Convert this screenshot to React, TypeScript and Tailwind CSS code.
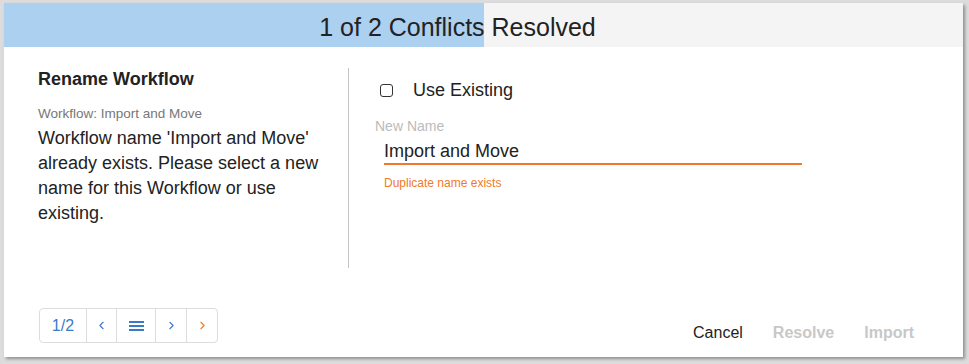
import { ChevronLeft, ChevronRight } from 'lucide-react';

// Conflict resolution dialog: rename a duplicate workflow on import

export default function App() {
  const resolved = 1;
  const total = 2;

  return (
    <div className="h-[364px] w-[969px] bg-[#dcdcdc] pt-[3px] pl-[4px] font-['Liberation_Sans',Arial,sans-serif]">
      <div className="flex h-[354px] w-[959px] flex-col bg-white shadow-[2px_2px_3px_rgba(0,0,0,0.35)]">
        {/* progress header */}
        <div className="relative h-[44px] w-full bg-[#f4f4f4]">
          <div
            className="absolute inset-y-0 left-0 bg-[#abd0f0]"
            style={{ width: `${(resolved / total) * 100}%` }}
          />
          <div className="relative flex h-full items-center justify-center pt-[6px] pr-[52px] text-[25px] text-[#222]">
            {resolved} of {total} Conflicts Resolved
          </div>
        </div>

        {/* body */}
        <div className="flex pt-[21px]">
          <div className="w-[344px] pl-[34px] pr-[12px]">
            <h2 className="mt-[1px] text-[18px] font-bold leading-[20px] text-[#222]">
              Rename Workflow
            </h2>
            <div className="mt-[17px] text-[13.5px] leading-[16px] text-[#777]">
              Workflow: Import and Move
            </div>
            <p className="mt-[4px] text-[18px] leading-[25px] text-[#222]">
              Workflow name 'Import and Move' already exists. Please select a new
              name for this Workflow or use existing.
            </p>
          </div>

          <div className="h-[200px] w-px bg-[#c4c4c4]" />

          <div className="flex-1 pl-[26px]">
            <label className="mt-[11px] flex items-center pl-[5px]">
              <span className="h-[13px] w-[13px] rounded-[3px] border border-[#333]" />
              <span className="ml-[20px] text-[18px] leading-[22px] text-[#222]">
                Use Existing
              </span>
            </label>
            <div className="mt-[17px] text-[14px] leading-[16px] text-[#bbb]">New Name</div>
            <div className="ml-[9px] mt-[5px] w-[418px]">
              <div className="text-[18px] leading-[24px] text-[#222]">Import and Move</div>
              <div className="h-[1.5px] w-full bg-[#f07a2a]" />
            </div>
            <div className="ml-[9px] mt-[11px] text-[12px] leading-[14px] text-[#f07a2a]">
              Duplicate name exists
            </div>
          </div>
        </div>

        {/* footer */}
        <div className="mt-auto flex items-end justify-between pb-[14px] pl-[35px] pr-[49px]">
          <div className="flex h-[35px] overflow-hidden rounded-[4px] border border-[#ddd] text-[#3a7bc8]">
            <div className="flex w-[47px] items-center justify-center border-r border-[#ddd] text-[16px]">
              {resolved}/{total}
            </div>
            <div className="flex w-[30px] items-center justify-center border-r border-[#ddd]">
              <ChevronLeft size={13} strokeWidth={2} />
            </div>
            <div className="flex w-[39px] items-center justify-center border-r border-[#ddd]">
              <svg width="15" height="12" viewBox="0 0 15 12">
                <rect x="0" y="1" width="15" height="2" fill="#3a7bc8" />
                <rect x="0" y="5" width="15" height="2" fill="#3a7bc8" />
                <rect x="0" y="9" width="15" height="2" fill="#3a7bc8" />
              </svg>
            </div>
            <div className="flex w-[31px] items-center justify-center border-r border-[#ddd]">
              <ChevronRight size={13} strokeWidth={2} />
            </div>
            <div className="flex w-[30px] items-center justify-center text-[#f07a2a]">
              <ChevronRight size={13} strokeWidth={2} />
            </div>
          </div>

          <div className="flex items-center gap-[30px] pb-[2px] text-[16px] leading-[16px]">
            <button className="text-[#222]">Cancel</button>
            <button className="font-bold text-[#c8c8c8]">Resolve</button>
            <button className="font-bold text-[#c8c8c8]">Import</button>
          </div>
        </div>
      </div>
    </div>
  );
}
